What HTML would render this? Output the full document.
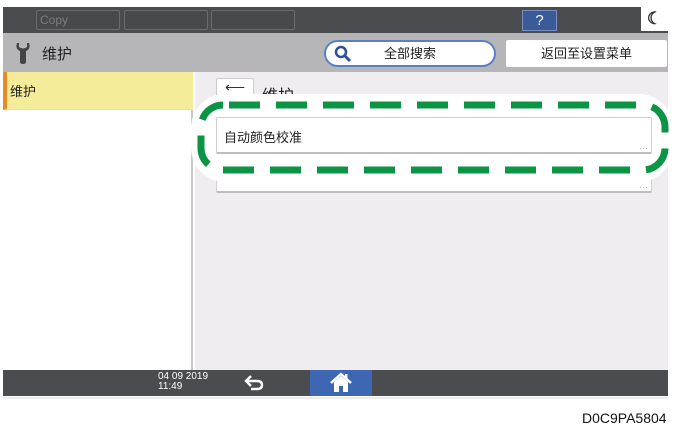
<!DOCTYPE html>
<html><head><meta charset="utf-8"><style>
*{margin:0;padding:0;box-sizing:border-box}
body{width:679px;height:431px;background:#fff;position:relative;overflow:hidden;font-family:"Liberation Sans","Noto Sans CJK SC",sans-serif}
.a{position:absolute}
.tb{background:#4b4c50}
.tab{top:10px;height:20px;border:1px solid #6a6b6f;border-radius:2px;background:#48494d;color:#7c7d80;font-size:12px;padding:2px 3px;font-family:"Liberation Sans Narrow","Liberation Sans",sans-serif}
.card{background:#fff;border:1px solid #cfcfd2;border-bottom:2px solid #bdbdc0;border-radius:2px}
.dots{position:absolute;right:3px;bottom:0px;font-size:9px;color:#999;letter-spacing:0px;line-height:8px}
</style></head><body>
<div class="a tb" style="left:3px;top:7px;width:665px;height:26px"></div>
<div class="a tab" style="left:36px;width:84px">Copy</div>
<div class="a tab" style="left:124px;width:84px"></div>
<div class="a tab" style="left:211px;width:84px"></div>
<div class="a" style="left:522px;top:10px;width:35px;height:21px;background:#3b5a9a;border:1px solid #7b8fbf;color:#fff;font-size:15px;text-align:center;line-height:19px">?</div>
<div class="a" style="left:641px;top:7px;width:27px;height:24px;background:#fff;font-size:17px;text-align:center;line-height:24px;color:#333;font-weight:bold">☾</div>
<div class="a" style="left:3px;top:33px;width:665px;height:39px;background:#b6b6b8"></div>
<svg class="a" style="left:14px;top:41px" width="18" height="24" viewBox="0 0 18 24"><path d="M3 2 Q1 8 6 10 L6 22 Q9 24 12 22 L12 10 Q17 8 15 2 L13 2 L13 6 Q9 9 5 6 L5 2Z" fill="#444"/></svg>
<div class="a" style="left:42px;top:43px;font-size:15px;color:#222">维护</div>
<div class="a" style="left:324px;top:40px;width:172px;height:27px;background:#fff;border:2px solid #5a7fc6;border-radius:14px;font-size:13px;color:#222;text-align:center;line-height:23px">全部搜索</div>
<svg class="a" style="left:334px;top:45px" width="18" height="18" viewBox="0 0 18 18"><circle cx="7" cy="7" r="5" fill="none" stroke="#2c4f9a" stroke-width="2.5"/><path d="M11 11 L16 16" stroke="#2c4f9a" stroke-width="2.8"/></svg>
<div class="a" style="left:506px;top:40px;width:161px;height:27px;background:#fff;border-radius:2px;font-size:13px;color:#222;text-align:center;line-height:27px">返回至设置菜单</div>
<div class="a" style="left:3px;top:72px;width:190px;height:298px;background:#fff;border-right:2px solid #c8c8ca"></div>
<div class="a" style="left:3px;top:72px;width:190px;height:38px;background:#f5ec9a;border-left:4px solid #e98b25;border-bottom:1px solid #ddd;font-size:13px;padding:9px 3px;color:#222">维护</div>
<div class="a" style="left:195px;top:72px;width:473px;height:298px;background:#efedf0"></div>
<div class="a" style="left:216px;top:78px;width:38px;height:26px;background:#fff;border:1px solid #ccc;border-radius:2px;font-size:14px;text-align:center;color:#333">⟵</div>
<div class="a" style="left:262px;top:82px;font-size:16px;color:#222">维护</div>
<div class="a card" style="left:216px;top:155px;width:436px;height:38px"><span class="dots">···</span></div>
<div class="a" style="left:191px;top:94px;width:482px;height:88px;background:#fff;border-radius:34px"></div>
<svg class="a" style="left:191px;top:94px" width="482" height="88"><rect x="10" y="11" width="464" height="65" rx="22" fill="none" stroke="#0c9445" stroke-width="7" stroke-dasharray="31 16" stroke-dashoffset="-6"/></svg>
<div class="a card" style="left:216px;top:117px;width:436px;height:37px;font-size:13px;color:#222;padding:9px 7px">自动颜色校准<span class="dots">···</span></div>
<div class="a tb" style="left:3px;top:370px;width:665px;height:26px"></div>
<div class="a" style="left:158px;top:372px;font-size:10px;color:#fff;line-height:10px;font-family:'Liberation Sans Narrow','Liberation Sans',sans-serif">04 09 2019<br>11:49</div>
<svg class="a" style="left:243px;top:374px" width="22" height="18" viewBox="0 0 22 18"><path d="M8 2 L3 7 L8 12 M3 7 L14 7 Q19 7 19 11 Q19 15 14 15 L8 15" fill="none" stroke="#fff" stroke-width="2.4"/></svg>
<div class="a" style="left:310px;top:370px;width:62px;height:26px;background:#3d66b3"></div>
<svg class="a" style="left:329px;top:372px" width="24" height="22" viewBox="0 0 24 22"><path d="M2 11 L12 2 L22 11" fill="none" stroke="#fff" stroke-width="2.5"/><path d="M5 10 L5 20 L10 20 L10 14 L14 14 L14 20 L19 20 L19 10 L12 4Z" fill="#fff"/><rect x="16" y="2" width="2.5" height="5" fill="#fff"/></svg>
<div class="a" style="left:3px;top:397px;width:665px;height:2px;background:#ececee"></div>
<div class="a" style="left:582px;top:410px;font-size:14px;color:#111">D0C9PA5804</div>
</body></html>
